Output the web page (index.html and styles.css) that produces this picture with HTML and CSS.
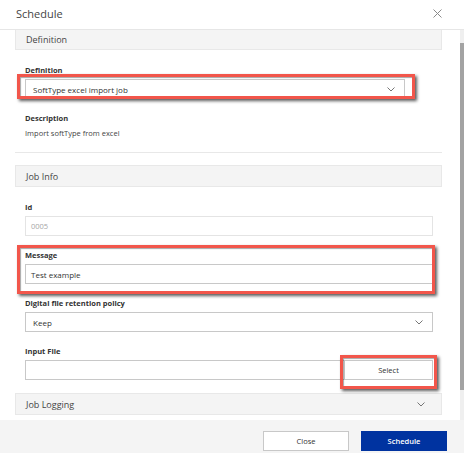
FILE: index.html
```html
<!DOCTYPE html>
<html>
<head>
<meta charset="utf-8">
<link rel="stylesheet" href="styles.css">
</head>
<body>
<div class="dialog">
  <header class="dlg-head">
    <h1 class="title">Schedule</h1>
    <button class="close" aria-label="Close">
      <svg width="9" height="9" viewBox="0 0 9 9"><path d="M0.5 0.5L8.5 8.5M8.5 0.5L0.5 8.5" stroke="#8a8a8a" stroke-width="1" fill="none"/></svg>
    </button>
  </header>
  <div class="dlg-body">
    <div class="scroll">
      <div class="content">
        <div class="band">Definition</div>
        <div class="section">
          <div class="field">
            <label class="lbl">Definition</label>
            <div class="select narrow"><span>SoftType excel import job</span>
              <svg class="chev" width="8" height="5" viewBox="0 0 8 5"><path d="M0.5 0.5L4 4L7.5 0.5" stroke="#666" stroke-width="0.9" fill="none"/></svg>
            </div>
          </div>
          <div class="field">
            <label class="lbl">Description</label>
            <div class="desc">Import softType from excel</div>
          </div>
        </div>
        <hr class="divider">
        <div class="band">Job Info</div>
        <div class="section">
          <div class="field">
            <label class="lbl">Id</label>
            <div class="input disabled">0005</div>
          </div>
          <div class="field">
            <label class="lbl">Message</label>
            <div class="input">Test example</div>
          </div>
          <div class="field">
            <label class="lbl">Digital file retention policy</label>
            <div class="select"><span>Keep</span>
              <svg class="chev" width="8" height="5" viewBox="0 0 8 5"><path d="M0.5 0.5L4 4L7.5 0.5" stroke="#666" stroke-width="0.9" fill="none"/></svg>
            </div>
          </div>
          <div class="field">
            <label class="lbl">Input File</label>
            <div class="file-row">
              <div class="input grow"></div>
              <button class="btn select-btn">Select</button>
            </div>
          </div>
        </div>
        <div class="band band-collapse"><span>Job Logging</span>
          <svg class="chev" width="8" height="5" viewBox="0 0 8 5"><path d="M0.5 0.5L4 4L7.5 0.5" stroke="#666" stroke-width="0.9" fill="none"/></svg>
        </div>
      </div>
    </div>
    <div class="scrollbar"><div class="thumb"></div></div>
  </div>
  <footer class="dlg-foot">
    <button class="btn">Close</button>
    <button class="btn primary">Schedule</button>
  </footer>
  <div class="annot a-def"></div>
  <div class="annot a-msg"></div>
  <div class="annot a-sel"></div>
</div>
</body>
</html>
```
FILE: styles.css
```css
* { box-sizing: border-box; }
html, body { margin: 0; padding: 0; }
body {
  width: 464px;
  height: 453px;
  overflow: hidden;
  background: #fff;
  font-family: "Open Sans", "Noto Sans", sans-serif;
  color: #333;
}
.dialog {
  position: relative;
  width: 464px;
  height: 453px;
  display: flex;
  flex-direction: column;
  background: #fff;
}
.dlg-head {
  height: 30px;
  flex: none;
  display: flex;
  align-items: center;
  justify-content: space-between;
  padding: 0 22px 0 16px;
  border-bottom: 1px solid #e6e6e6;
}
.title {
  margin: 0;
  font-size: 11px;
  font-weight: 400;
  color: #444;
  line-height: 14px;
  padding-bottom: 2px;
}
.close {
  border: 0;
  background: none;
  padding: 0;
  width: 9px;
  height: 9px;
  display: flex;
  margin-bottom: 2px;
}
.dlg-body {
  flex: 1;
  display: flex;
  min-height: 0;
}
.scroll {
  flex: 1;
  overflow: hidden;
}
.content {
  margin-top: -2px;
  padding: 0 18px 0 15px;
}
.band {
  height: 22px;
  background: #f4f4f4;
  border: 1px solid #e8e8e8;
  display: flex;
  align-items: center;
  justify-content: space-between;
  padding: 0 15px 0 10px;
  font-size: 9px;
  color: #444;
}
.section {
  padding: 14px 9px 13px 10px;
  display: flex;
  flex-direction: column;
  gap: 13px;
}
.field {
  display: flex;
  flex-direction: column;
  gap: 3px;
}
.lbl {
  font-size: 7.5px;
  font-weight: 700;
  line-height: 12px;
  color: #333;
}
.desc {
  font-size: 7.5px;
  line-height: 12px;
  color: #444;
}
.input, .select {
  height: 20px;
  border: 1px solid #c8c8c8;
  background: #fff;
  font-size: 8px;
  color: #333;
  display: flex;
  align-items: center;
  padding: 0 6px;
}
.input { padding-left: 5px; }
.input.disabled {
  border-color: #e4e4e4;
  color: #a6a6a6;
  font-size: 7.5px;
}
.select {
  justify-content: space-between;
  padding: 0 9px 0 7px;
}
.select.narrow { width: 380px; }
.chev { display: block; }
.divider {
  margin: 0;
  border: 0;
  border-top: 1px solid #e8e8e8;
  margin-bottom: 12px;
}
.file-row {
  display: flex;
}
.grow { flex: 1; }
.btn {
  font-family: inherit;
  height: 20px;
  width: 86px;
  border: 1px solid #c8c8c8;
  background: #fff;
  font-size: 7.5px;
  color: #333;
  padding: 0;
}
.select-btn {
  width: 88px;
  border-left: 0;
}
.band-collapse { padding-right: 16px; }
.scrollbar {
  width: 4px;
  flex: none;
  background: #efefef;
  padding-top: 13px;
  padding-bottom: 30px;
}
.thumb {
  height: 100%;
  background: #a3a3a3;
}
.dlg-foot {
  height: 33px;
  flex: none;
  background: #f4f4f4;
  display: flex;
  justify-content: flex-end;
  align-items: flex-start;
  gap: 12px;
  padding: 11px 17px 0 0;
}
.primary {
  background: #0033a0;
  border-color: #0033a0;
  color: #fff;
  font-weight: 600;
}
.annot {
  position: absolute;
  border: 3px solid #f2564b;
  box-shadow: 2px 2px 3px rgba(0,0,0,0.65), inset 1px 1px 1px rgba(0,0,0,0.35);
  pointer-events: none;
}
.a-def { left: 17px; top: 74px; width: 398px; height: 25px; }
.a-msg { left: 17px; top: 245px; width: 418px; height: 49px; }
.a-sel { left: 340px; top: 355px; width: 97px; height: 34px; }
```
